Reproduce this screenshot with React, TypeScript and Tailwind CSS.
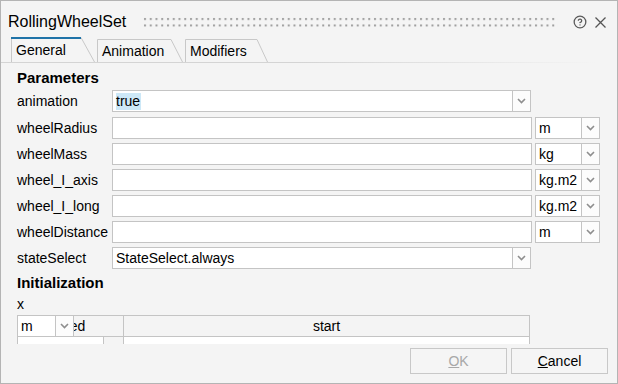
import React from 'react';

const Chevron = () => (
  <svg width="9" height="6" viewBox="0 0 9 6">
    <path d="M1 1l3.5 3.5L8 1" fill="none" stroke="#8e8e8e" strokeWidth="1.6" />
  </svg>
);

const DropButton = () => (
  <div className="w-[19px] h-full -ml-px border border-[#c4c4c4] bg-[#fcfcfc] flex items-center justify-center">
    <Chevron />
  </div>
);

type Row = { label: string; value?: string; unit?: string; highlight?: boolean };

const params: Row[] = [
  { label: 'animation', value: 'true', highlight: true },
  { label: 'wheelRadius', unit: 'm' },
  { label: 'wheelMass', unit: 'kg' },
  { label: 'wheel_I_axis', unit: 'kg.m2' },
  { label: 'wheel_I_long', unit: 'kg.m2' },
  { label: 'wheelDistance', unit: 'm' },
  { label: 'stateSelect', value: 'StateSelect.always' },
];

const ParamRow = ({ row }: { row: Row }) => (
  <div className="flex h-[22px] items-stretch">
    <div className="w-[95px] shrink-0 flex items-center text-[14px] whitespace-nowrap">{row.label}</div>
    {row.unit ? (
      <>
        <div className="w-[420px] border border-[#c4c4c4] bg-white" />
        <div className="w-[47px] ml-[3px] border border-[#c4c4c4] bg-white flex items-center pl-[3px] text-[14px]">
          {row.unit}
        </div>
        <DropButton />
      </>
    ) : (
      <>
        <div className="w-[401px] border border-[#c4c4c4] bg-white flex items-center pl-[3px] text-[14px]">
          {row.highlight ? (
            <span className="bg-[#cde8f7] leading-[17px] pr-[1px]">{row.value}</span>
          ) : (
            row.value
          )}
        </div>
        <DropButton />
      </>
    )}
  </div>
);

const tabs = [
  { label: 'General', width: 84, slant: 14, active: true },
  { label: 'Animation', width: 86, slant: 12, active: false },
  { label: 'Modifiers', width: 83, slant: 11, active: false },
];

const Tab = ({ label, width, slant, active }: { label: string; width: number; slant: number; active: boolean }) => {
  const h = active ? 25 : 23;
  return (
    <div className={active ? 'relative h-[25px] flex items-center pl-[5px]' : 'relative h-[23px] flex items-center pl-[5px]'} style={{ width }}>
      <svg className="absolute inset-0" width={width} height={h}>
        <path d={`M0.5 ${h} V0.5 H${width - slant} L${width - 0.5} ${h}`} fill="none" stroke="#c8c8c8" />
        {active && <line x1="0" y1="1" x2={width - slant} y2="1" stroke="#1f73a8" strokeWidth="2" />}
      </svg>
      <span className="relative text-[14px] pt-[1px]">{label}</span>
    </div>
  );
};

export default function App() {
  return (
    <div className="w-[618px] h-[384px] border border-[#b4b4b4] bg-[#f4f4f4] text-black font-['Liberation_Sans',Arial,sans-serif] flex flex-col overflow-hidden">
      {/* title bar */}
      <div className="h-[36px] pt-[6px] flex items-center pl-[7px] pr-[10px] shrink-0">
        <span className="text-[16px] leading-[20px] whitespace-nowrap">RollingWheelSet</span>
        <svg className="flex-1 h-[10px] ml-[17px]">
          <defs>
            <pattern id="grip" width="5.75" height="6.5" patternUnits="userSpaceOnUse">
              <rect x="1" y="1" width="2" height="2" fill="#9c9c9c" />
            </pattern>
          </defs>
          <rect width="100%" height="100%" fill="url(#grip)" />
        </svg>
        <svg className="ml-[15px]" width="14" height="14" viewBox="0 0 24 24" fill="none" stroke="#5a5a5a" strokeWidth="2.2" strokeLinecap="round">
          <circle cx="12" cy="12" r="10" />
          <path d="M9.09 9a3 3 0 0 1 5.83 1c0 2-3 3-3 3" />
          <path d="M12 17h.01" />
        </svg>
        <svg className="ml-[7px]" width="13" height="13" viewBox="0 0 13 13" stroke="#555" strokeWidth="1.3">
          <path d="M1.5 1.5l10 10M11.5 1.5l-10 10" />
        </svg>
      </div>

      {/* tabs */}
      <div className="h-[25px] flex items-end gap-[2px] pl-[10px] shrink-0">
        {tabs.map((t) => (
          <Tab key={t.label} {...t} />
        ))}
      </div>

      {/* body */}
      <div className="h-[282px] shrink-0 overflow-hidden flex flex-col">
        <div className="h-px mr-[20px] bg-linear-to-r from-[#d4d4d4] via-[#d4d4d4] to-transparent shrink-0" />
        <div className="pl-[16px] pt-[4px] flex flex-col">
          <div className="h-[22px] leading-[22px] text-[15px] font-bold">Parameters</div>
          <div className="mt-[1px] flex flex-col gap-[4px]">
            {params.map((r, i) => (
              <div key={r.label} className={i === 0 ? 'mb-[1px]' : ''}>
                <ParamRow row={r} />
              </div>
            ))}
          </div>
          <div className="mt-[3px] h-[22px] leading-[22px] text-[15px] font-bold">Initialization</div>
          <div className="h-[20px] leading-[20px] text-[14px]">x</div>
          <div className="relative w-[513px] mt-[1px]">
            <div className="flex h-[22px] border border-[#c4c4c4] bg-[#f4f4f4] text-[14px]">
              <div className="w-[106px] border-r border-[#c4c4c4] flex items-center justify-center">fixed</div>
              <div className="flex-1 flex items-center justify-center">start</div>
            </div>
            <div className="flex h-[22px] border-x border-[#c4c4c4]">
              <div className="w-[86px] bg-white border-r border-[#c4c4c4]" />
              <div className="w-[20px] border-r border-[#c4c4c4]" />
              <div className="flex-1 bg-white" />
            </div>
            <div className="absolute left-0 top-0 h-[22px] flex">
              <div className="w-[39px] border border-[#c4c4c4] bg-white flex items-center pl-[3px] text-[14px]">m</div>
              <DropButton />
            </div>
          </div>
        </div>
      </div>

      {/* buttons */}
      <div className="mt-[4px] h-[26px] flex justify-end gap-[4px] pr-[9px] shrink-0 text-[14px]">
        <div className="w-[97px] border border-[#c8c8c8] bg-[#f5f5f5] flex items-center justify-center text-[#a8a8a8]">
          <span><span className="underline">O</span>K</span>
        </div>
        <div className="w-[97px] border border-[#c8c8c8] bg-[#f5f5f5] flex items-center justify-center">
          <span><span className="underline">C</span>ancel</span>
        </div>
      </div>
    </div>
  );
}
